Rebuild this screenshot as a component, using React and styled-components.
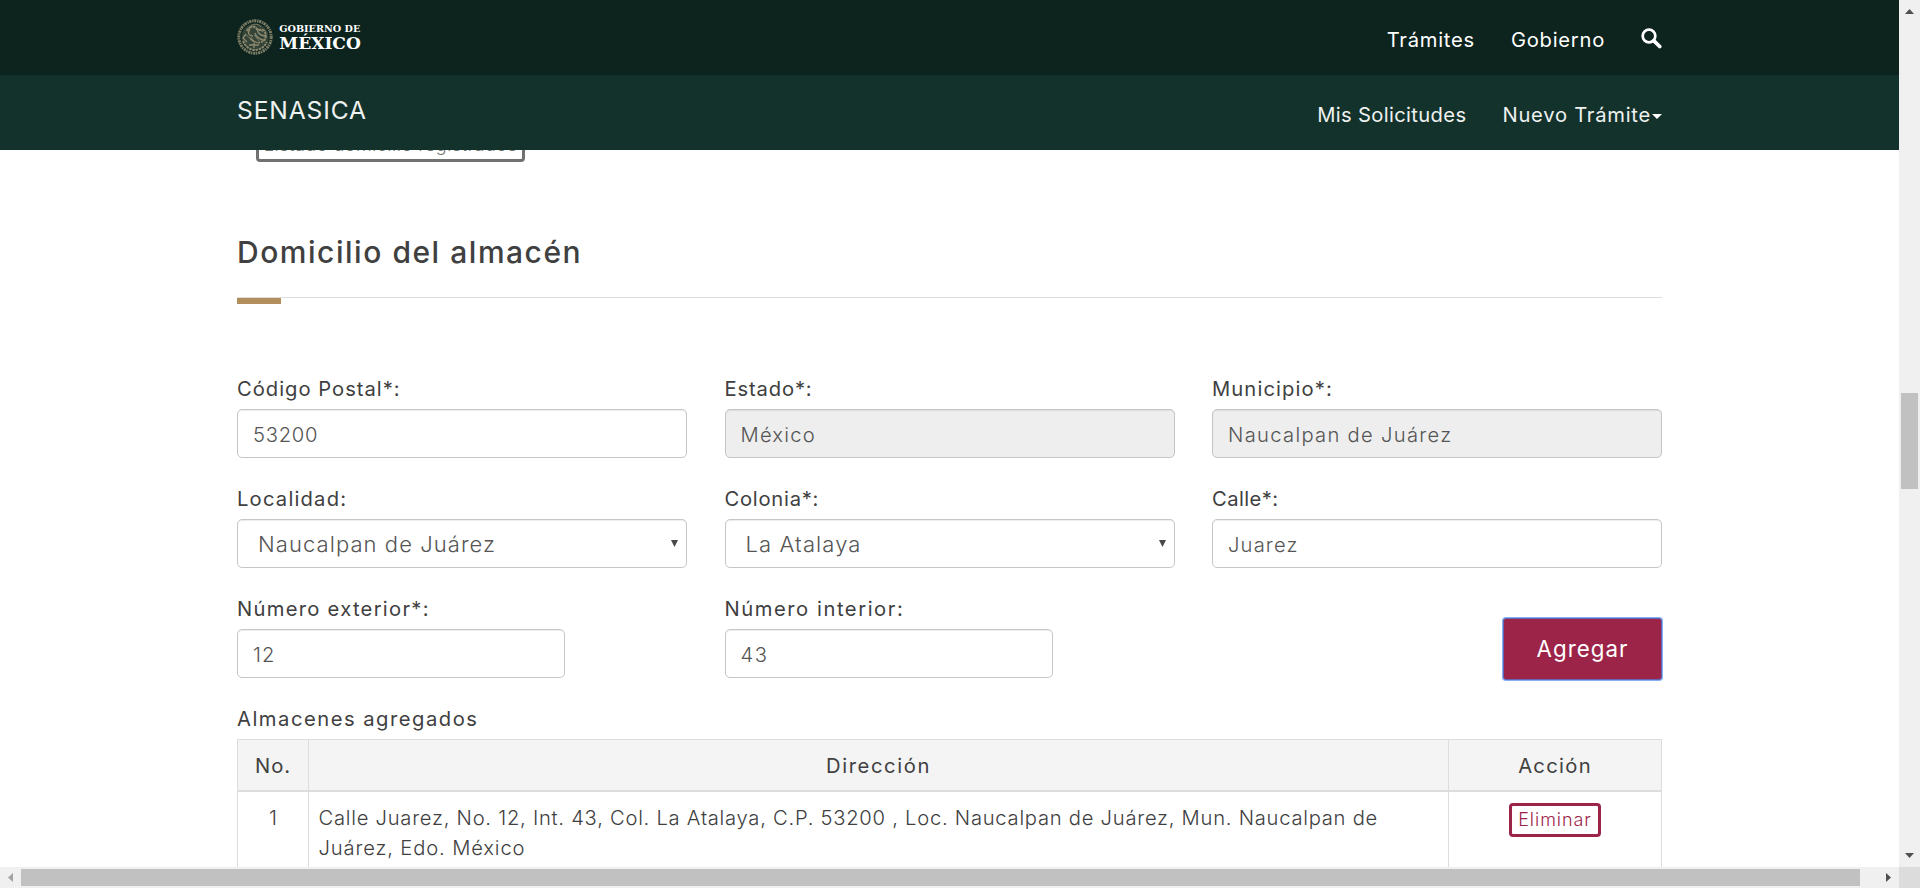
import React from "react";
import styled, { createGlobalStyle } from "styled-components";

const GlobalStyle = createGlobalStyle`
  * { box-sizing: border-box; }
  body {
    margin: 0;
    overflow: hidden;
    background: #fff;
    color: #404041;
    font: 400 20.2px/30px Inter, "Open Sans", sans-serif;
  }
`;

const Window = styled.div`
  display: grid;
  grid-template: 867px 21px / 1899px 21px;
  width: 1920px;
  height: 888px;
  overflow: hidden;
`;

const Viewport = styled.div`
  overflow: hidden;
`;

const Header = styled.header`
  position: relative;
  z-index: 1;
`;

const Bar = styled.div`
  height: 75px;
  background: ${(p) => (p.$sub ? "#13322b" : "#0c231e")};
  color: ${(p) => (p.$sub ? "#eef1f0" : "#fff")};
`;

const Container = styled.div`
  width: 1425px;
  margin: 0 auto;
`;

const BarContent = styled(Container)`
  display: flex;
  justify-content: space-between;
  height: 100%;
`;

const Brand = styled.svg`
  display: block;
  width: 130px;
  height: 75px;
`;

const Institution = styled.span`
  padding-top: 20px;
  font-size: 24.6px;
  letter-spacing: 0.88px;
`;

const Nav = styled.nav`
  display: flex;
  gap: 36px;
  padding-top: 25px;
`;

const NavLink = styled.a`
  display: flex;
  letter-spacing: ${(p) => p.$track}px;
  white-space: nowrap;
`;

const SearchIcon = styled.svg`
  width: 21px;
  height: 21px;
  margin-top: 3px;
`;

const Caret = styled.svg`
  width: 10px;
  height: 5px;
  margin: 14px 0 0 1px;
`;

const Main = styled.main`
  margin-top: -22px;
`;

const OutlineButton = styled.button`
  display: block;
  width: ${(p) => p.$width}px;
  height: 34px;
  margin: ${(p) => p.$margin || "0 auto"};
  padding: 0 0 1px;
  border: 3px solid ${(p) => p.$color};
  border-radius: 4px;
  background: #fff;
  color: ${(p) => p.$color};
  font: 300 18px/26px Inter, sans-serif;
  letter-spacing: ${(p) => p.$track}px;
  white-space: nowrap;
`;

const SectionTitle = styled.h3`
  margin: 70px 0 0;
  padding-bottom: 25px;
  border-bottom: 1px solid #ddd;
  font-size: 30px;
  font-weight: 500;
  line-height: 40px;
  letter-spacing: 1.53px;
`;

const Accent = styled.div`
  width: 44px;
  height: 6px;
  background: #b38e5d;
`;

const Form = styled.form`
  display: grid;
  grid-template-columns: repeat(3, 450px);
  column-gap: 37.5px;
  row-gap: 26px;
  margin-top: 70px;
`;

const FieldBox = styled.div`
  display: flex;
  flex-direction: column;
  gap: 5px;
  width: ${(p) => (p.$short ? "328px" : "auto")};
`;

const Label = styled.label`
  letter-spacing: ${(p) => p.$track}px;
  white-space: nowrap;
`;

const Input = styled.input`
  width: 100%;
  height: 49px;
  padding: 1px 15px 0;
  border: 1px solid #c6c6c6;
  border-radius: 5px;
  outline: 0;
  background: ${(p) => (p.disabled ? "#eee" : "#fff")};
  box-shadow: inset 0 1px 1px rgba(0, 0, 0, 0.075);
  color: #555;
  opacity: 1;
  font: 300 20.2px Inter, sans-serif;
  letter-spacing: ${(p) => p.$track}px;
`;

const SelectBox = styled.div`
  display: grid;
  align-items: center;

  & > * {
    grid-area: 1 / 1;
  }
`;

const Select = styled.select`
  width: 100%;
  height: 49px;
  padding: 1px 20px 0;
  border: 1px solid #c6c6c6;
  border-radius: 5px;
  appearance: none;
  background: #fff;
  box-shadow: inset 0 1px 1px rgba(0, 0, 0, 0.075);
  color: #555;
  font: 300 22px Inter, sans-serif;
  letter-spacing: ${(p) => p.$track}px;
`;

const SelectArrow = styled.svg`
  justify-self: end;
  width: 7px;
  height: 7px;
  margin-right: 9px;
  pointer-events: none;
`;

const SubmitButton = styled.button`
  justify-self: end;
  align-self: end;
  width: 159px;
  height: 62px;
  margin-bottom: -2px;
  padding: 0 0 1px;
  border: 1px solid #5f66b5;
  border-radius: 3px;
  background: #9d2449;
  box-shadow: 0 0 0 1px #86b0f2;
  color: #fff;
  font: 400 22.3px Inter, sans-serif;
  letter-spacing: 1.05px;
`;

const TableLabel = styled.div`
  margin: 26px 0 5px;
  letter-spacing: 1.51px;
`;

const Table = styled.table`
  width: 1425px;
  table-layout: fixed;
  border-collapse: separate;
  border-spacing: 0;
  border-left: 1px solid #ddd;
`;

const HeadCell = styled.th`
  width: ${(p) => p.$width}px;
  padding: 11px 0 9px;
  border: solid #ddd;
  border-width: 1px 1px 2px 0;
  background: #f4f4f4;
  font-weight: 400;
  letter-spacing: ${(p) => p.$track}px;
`;

const Cell = styled.td`
  height: 110px;
  padding: 11px 9.5px;
  border-right: 1px solid #ddd;
  font-weight: 300;
  text-align: ${(p) => (p.$left ? "left" : "center")};
  vertical-align: top;
  white-space: nowrap;
`;

const AddressLine = styled.div`
  letter-spacing: ${(p) => p.$track}px;
`;

const Track = styled.div`
  display: flex;
  flex-direction: ${(p) => (p.$vertical ? "column" : "row")};
  align-items: center;
  justify-content: space-between;
  padding: ${(p) => (p.$vertical ? "9px 0 9px" : "0 8px")};
  background: #f0f0f0;
`;

const Thumb = styled.div`
  width: ${(p) => p.$width}px;
  height: ${(p) => p.$height}px;
  background: #c1c1c1;
`;

const VerticalThumb = styled(Thumb)`
  margin-bottom: -14px;
`;

const HorizontalThumb = styled(Thumb)`
  margin: 0 auto 0 8px;
`;

const TrackArrow = styled.svg`
  flex: none;
  width: ${(p) => p.$width}px;
  height: ${(p) => p.$height}px;
  fill: ${(p) => p.$color || "#505050"};
`;

const Corner = styled.div`
  background: #dcdcdc;
`;

function Logo() {
  return (
    <Brand viewBox="0 0 130 75">
      <circle cx="18" cy="37" r="13.5" fill="#a29b7d" opacity=".28" />
      <g fill="none" stroke="#a29b7d">
        <circle cx="18" cy="37" r="16.2" strokeWidth="3" strokeDasharray="2.2 .8 1.4 .6" opacity=".75" />
        <path d="M6 41c3 7 8 9 12 9s9-2 12-8" strokeWidth="2" strokeDasharray="2.5 .8" opacity=".8" />
        <path d="M10 31c3-6 8-5 10-2s6-2 8 3c2 5 0 9-4 10" strokeWidth="2" strokeDasharray="3 .6" opacity=".8" />
        <path d="M13 29c-3 4-1 7 3 7m4-7c1 5 5 7 9 7m-11-3c1 4 4 6 8 7m-13-2c2 4 6 4 10 5m-14-9-3 4 4 4m7 1v5m-5-3h10" strokeWidth="1.3" opacity=".8" />
        <path d="M14 26c3-3 8-2 10 1m-15 8 4 3m8-9 5 3m-9 3 6 7m-9-5 4 6" strokeWidth="1" opacity=".6" />
      </g>
      <g fill="#fff" fontFamily="'DejaVu Serif', serif" fontWeight="700">
        <text x="42.3" y="32" fontSize="9.8" textLength="81" lengthAdjust="spacingAndGlyphs">GOBIERNO DE</text>
        <text x="42.3" y="49" fontSize="16" textLength="81.5" lengthAdjust="spacingAndGlyphs">MÉXICO</text>
      </g>
    </Brand>
  );
}

function TextField({ label, track, value, valueTrack, short, disabled }) {
  return (
    <FieldBox $short={short}>
      <Label $track={track}>{label}</Label>
      <Input value={value} $track={valueTrack} disabled={disabled} readOnly />
    </FieldBox>
  );
}

function SelectField({ label, track, value, valueTrack }) {
  return (
    <FieldBox>
      <Label $track={track}>{label}</Label>
      <SelectBox>
        <Select $track={valueTrack} defaultValue={value}>
          <option>{value}</option>
        </Select>
        <SelectArrow viewBox="0 0 7 7">
          <path d="M0 0h7L3.5 7z" fill="#484848" />
        </SelectArrow>
      </SelectBox>
    </FieldBox>
  );
}

export default function App() {
  return (
    <>
      <GlobalStyle />
      <Window>
        <Viewport>
          <Header>
            <Bar>
              <BarContent>
                <Logo />
                <Nav>
                  <NavLink $track={0.75}>Trámites</NavLink>
                  <NavLink $track={0.74}>Gobierno</NavLink>
                  <SearchIcon viewBox="0 0 21 21">
                    <circle cx="8" cy="8" r="6.3" fill="none" stroke="#fff" strokeWidth="2.7" />
                    <path d="m12.7 12.7 6 5.8" stroke="#fff" strokeWidth="3.8" strokeLinecap="round" />
                  </SearchIcon>
                </Nav>
              </BarContent>
            </Bar>
            <Bar $sub>
              <BarContent>
                <Institution>SENASICA</Institution>
                <Nav>
                  <NavLink $track={0.35}>Mis Solicitudes</NavLink>
                  <NavLink $track={0.75}>
                    Nuevo Trámite
                    <Caret viewBox="0 0 10 5">
                      <path d="M0 0h10L5 5z" fill="#fff" />
                    </Caret>
                  </NavLink>
                </Nav>
              </BarContent>
            </Bar>
          </Header>

          <Main>
            <Container>
              <OutlineButton $width={269} $margin="0 0 0 19px" $color="#6f7271" $track={0.5}>
                Listado domicilio registrados
              </OutlineButton>
              <SectionTitle>Domicilio del almacén</SectionTitle>
              <Accent />

              <Form>
                <TextField label="Código Postal*:" track={1.0} value="53200" valueTrack={0.75} />
                <TextField label="Estado*:" track={0.85} value="México" valueTrack={1.2} disabled />
                <TextField label="Municipio*:" track={1.1} value="Naucalpan de Juárez" valueTrack={1.3} disabled />
                <SelectField label="Localidad:" track={1.2} value="Naucalpan de Juárez" valueTrack={1.07} />
                <SelectField label="Colonia*:" track={0.75} value="La Atalaya" valueTrack={1.1} />
                <TextField label="Calle*:" track={0.4} value="Juarez" valueTrack={1.15} />
                <TextField label="Número exterior*:" track={1.28} value="12" valueTrack={1} short />
                <TextField label="Número interior:" track={1.55} value="43" valueTrack={1.5} short />
                <SubmitButton type="button">Agregar</SubmitButton>
              </Form>

              <TableLabel>Almacenes agregados</TableLabel>
              <Table>
                <thead>
                  <tr>
                    <HeadCell $width={71} $track={0.9}>No.</HeadCell>
                    <HeadCell $width={1140} $track={1.6}>Dirección</HeadCell>
                    <HeadCell $width={213} $track={1.3}>Acción</HeadCell>
                  </tr>
                </thead>
                <tbody>
                  <tr>
                    <Cell>1</Cell>
                    <Cell $left>
                      <AddressLine $track={0.743}>
                        Calle Juarez, No. 12, Int. 43, Col. La Atalaya, C.P. 53200 , Loc. Naucalpan de Juárez, Mun. Naucalpan de
                      </AddressLine>
                      <AddressLine $track={0.85}>Juárez, Edo. México</AddressLine>
                    </Cell>
                    <Cell>
                      <OutlineButton $width={92} $color="#9d2449" $track={0.95}>
                        Eliminar
                      </OutlineButton>
                    </Cell>
                  </tr>
                </tbody>
              </Table>
            </Container>
          </Main>
        </Viewport>

        <Track $vertical>
          <TrackArrow $width={9} $height={5} viewBox="0 0 9 5">
            <path d="M0 5h9L4.5 0z" />
          </TrackArrow>
          <VerticalThumb $width={17} $height={96} />
          <TrackArrow $width={9} $height={5} viewBox="0 0 9 5">
            <path d="M0 0h9L4.5 5z" />
          </TrackArrow>
        </Track>
        <Track>
          <TrackArrow $width={5} $height={9} $color="#a3a3a3" viewBox="0 0 5 9">
            <path d="M5 0v9L0 4.5z" />
          </TrackArrow>
          <HorizontalThumb $width={1839} $height={17} />
          <TrackArrow $width={5} $height={9} viewBox="0 0 5 9">
            <path d="M0 0v9l5-4.5z" />
          </TrackArrow>
        </Track>
        <Corner />
      </Window>
    </>
  );
}
